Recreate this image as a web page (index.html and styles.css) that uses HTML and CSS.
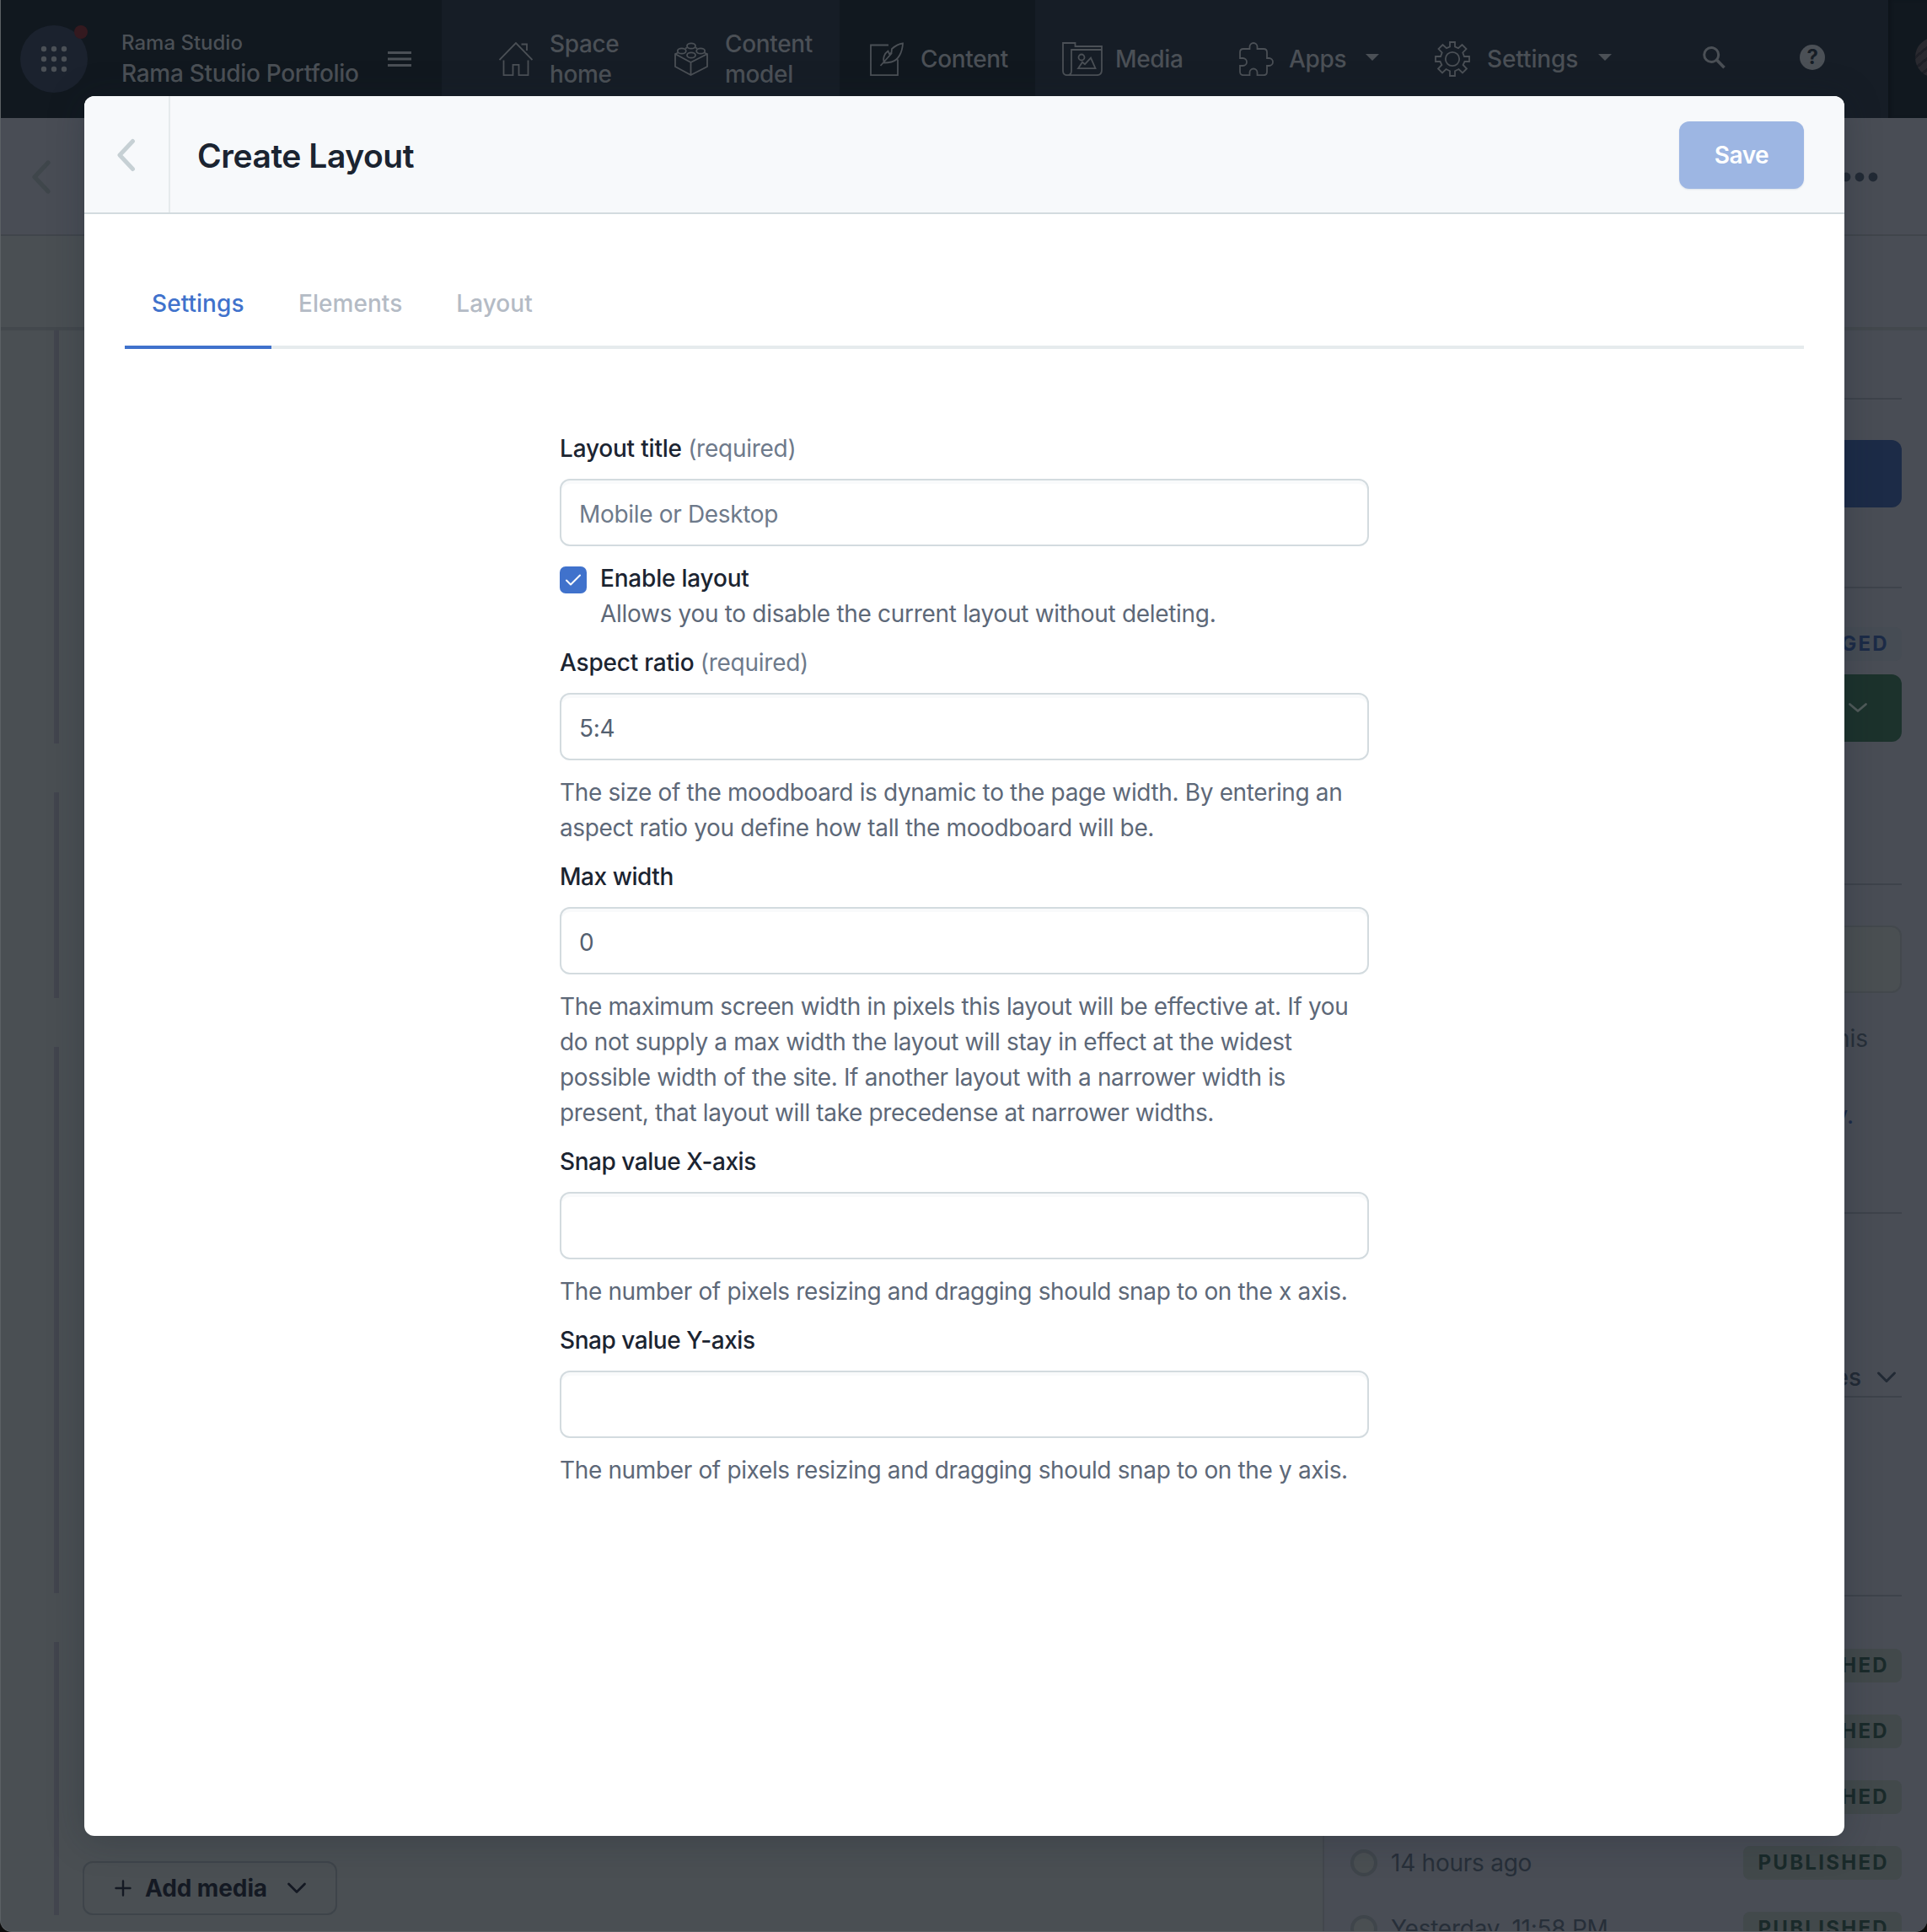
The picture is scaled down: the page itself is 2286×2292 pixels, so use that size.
FILE: index.html
```html
<!DOCTYPE html>
<html lang="en">
<head>
<meta charset="utf-8">
<title>Create Layout</title>
<link rel="stylesheet" href="styles.css">
</head>
<body>
<div class="page">
  <nav class="nav">
    <div class="nav-space">
      <div class="launcher">
        <svg width="80" height="80" viewBox="0 0 80 80"><g fill="#4b5056"><circle cx="28" cy="28" r="3.2"/><circle cx="40" cy="28" r="3.2"/><circle cx="52" cy="28" r="3.2"/><circle cx="28" cy="40" r="3.2"/><circle cx="40" cy="40" r="3.2"/><circle cx="52" cy="40" r="3.2"/><circle cx="28" cy="52" r="3.2"/><circle cx="40" cy="52" r="3.2"/><circle cx="52" cy="52" r="3.2"/></g></svg>
        <span class="launcher-dot"></span>
      </div>
      <div class="space-names"><span class="org">Rama Studio</span><span class="space">Rama Studio Portfolio</span></div>
      <svg class="burger" width="28" height="18" viewBox="0 0 28 18" fill="#4b5056"><path d="M0 0h28v3H0zM0 7.500h28v3H0zM0 15h28v3H0z"/></svg>
    </div>
    <div class="nav-item home">
      <svg class="line" width="40" height="40" viewBox="0 0 40 40"><path d="M0.500 21L20 1l19.500 20M5.500 21.500V39.200h11V26.800h7V39.200h11V21.500M26.500 2.500h6.500v7.500"/></svg>
      <span>Space<br>home</span>
    </div>
    <div class="nav-item model">
      <svg class="line" width="40" height="40" viewBox="0 0 40 40"><ellipse cx="20" cy="4.500" rx="5" ry="3.200"/><ellipse cx="8.800" cy="10.500" rx="5" ry="3.200"/><ellipse cx="31.200" cy="10.500" rx="5" ry="3.200"/><ellipse cx="20" cy="15.500" rx="5" ry="3.200"/><path d="M4.500 12.500L1 14v15l18.500 10L39 29V14l-3.500-1.500M1 14l18.500 10L39 14M19.500 24v15M13 7.500l2-1M27 7.500l-2-1"/></svg>
      <span>Content<br>model</span>
    </div>
    <div class="nav-item content">
      <svg class="line" width="40" height="40" viewBox="0 0 40 40"><path d="M22 3.500H1v35.700h32V20.500M12.500 28L26 13M17 24.500c-2-5 0-11 4.500-14l1.500 3.500 2.500-1.500.5-4.500c4-3.500 8-6 13-6.500-.5 10-5 20-13.500 22-3.500.8-6.500 1-8.500 1z"/></svg>
      <span>Content</span>
    </div>
    <div class="nav-item media">
      <svg class="line" width="48" height="40" viewBox="0 0 48 40"><path d="M6 39.200c-3 0-5-2-5-5V1h14.500v4H47v28c0 4-2 6.200-6 6.200zM6 39.200c3 0 5-2 5-5V9h36"/><circle cx="23" cy="18" r="3.500"/><path d="M19 31.200l5-7.500 3 2.500 7-7.500 5.500 12.500z"/></svg>
      <span>Media</span>
    </div>
    <div class="nav-item apps">
      <svg class="line" width="41" height="40" viewBox="0 0 41 40"><path d="M5 8h7.500V5.500a4.500 4.500 0 0 1 9 0V8H29c2.500 0 4 1.500 4 4v7h2.500a4.500 4.500 0 0 1 0 9H33v7c0 2.600-1.500 4.200-4 4.200h-7.500V36a4.500 4.500 0 0 0-9 0v3.200H5c-2.500 0-4-1.600-4-4.200v-7h3.500a4.500 4.500 0 0 0 0-9H1v-7c0-2.500 1.500-4 4-4z"/></svg>
      <span>Apps</span>
      <svg class="caret" width="16" height="8" viewBox="0 0 16 8"><path d="M0 0h16L8 8z" fill="#4b5056"/></svg>
    </div>
    <div class="nav-item settings">
      <svg class="line" width="42" height="42" viewBox="0 0 42 42"><circle cx="21" cy="21" r="8.200"/><path d="M18 1h6v5.500l4 1.700 4.500-4.200 5 5-4.200 4.500 1.700 4.500H41v6h-5.500l-1.900 4 4.400 4.500-5 5-4.500-4.500-4.500 2.200V41h-6v-5.800l-4.500-2.200L9 37.500l-5-5L8.400 28l-1.900-4H1v-6h6l1.700-4.500L4.500 9l5-5L14 8.200l4-1.700z"/></svg>
      <span>Settings</span>
      <svg class="caret" width="16" height="8" viewBox="0 0 16 8"><path d="M0 0h16L8 8z" fill="#4b5056"/></svg>
    </div>
    <div class="nav-tools">
      <svg width="28" height="27" viewBox="0 0 28 27" fill="none" stroke="#4b5056" stroke-width="3"><circle cx="10.200" cy="10" r="8.500"/><path d="M16.500 16L25.500 25.200" stroke-width="3.600"/></svg>
      <span class="help">?</span>
    </div>
    <div class="nav-user"><span class="avatar"></span></div>
  </nav>

  <header class="entry-head">
    <svg width="24" height="40" viewBox="0 0 24 40" fill="none" stroke="#3f464b" stroke-width="5.200" stroke-linecap="round" stroke-linejoin="round"><path d="M20 3L4 20l16 17"/></svg>
    <svg width="44" height="12" viewBox="0 0 44 12" fill="#222a35"><circle cx="6" cy="6" r="5.400"/><circle cx="22" cy="6" r="5.400"/><circle cx="38" cy="6" r="5.400"/></svg>
  </header>

  <div class="entry">
    <main class="editor">
      <div class="editor-tabs"></div>
      <div class="fields">
        <section class="field f1"></section>
        <section class="field f2"></section>
        <section class="field f3"></section>
        <section class="field f4">
          <button class="add">
            <svg width="20" height="20" viewBox="0 0 20 20" stroke="#141923" stroke-width="2.400" stroke-linecap="round"><path d="M10 1.500v17M1.500 10h17"/></svg>
            <span>Add media</span>
            <svg width="24" height="16" viewBox="0 0 24 16" fill="none" stroke="#141923" stroke-width="2.800" stroke-linecap="round" stroke-linejoin="round"><path d="M2.500 3l9.500 9.500L21.500 3"/></svg>
          </button>
        </section>
      </div>
    </main>
    <aside class="sidebar">
      <div class="side-tabs"></div>
      <div class="side-body">
        <hr class="r1">
        <div class="side-blue"></div>
        <hr class="r2">
        <div class="badge changed">CHANGED</div>
        <div class="side-green"><svg width="24" height="16" viewBox="0 0 24 16" fill="none" stroke="#515b5a" stroke-width="2.800" stroke-linecap="round" stroke-linejoin="round"><path d="M2.500 3.500l9.500 8 9.500-8"/></svg></div>
        <hr class="r3">
        <div class="side-input"></div>
        <p class="side-note">this</p>
        <p class="side-link">y.</p>
        <hr class="r4">
        <div class="side-select"><span>es</span><svg width="24" height="16" viewBox="0 0 24 16" fill="none" stroke="#222a35" stroke-width="3" stroke-linecap="round" stroke-linejoin="round"><path d="M2.500 3l9.500 9.500L21.500 3"/></svg></div>
        <hr class="r5">
        <ul class="versions">
          <li><span class="badge">PUBLISHED</span></li>
          <li><span class="badge">PUBLISHED</span></li>
          <li><span class="badge">PUBLISHED</span></li>
          <li><i class="radio"></i><span class="when">14 hours ago</span><span class="badge">PUBLISHED</span></li>
          <li><i class="radio"></i><span class="when">Yesterday, 11:58 PM</span><span class="badge">PUBLISHED</span></li>
        </ul>
      </div>
    </aside>
  </div>
</div>

<div class="modal" role="dialog">
  <header class="modal-head">
    <div class="back"><svg width="24" height="42" viewBox="0 0 24 42" fill="none" stroke="#c6d0d4" stroke-width="5" stroke-linecap="round" stroke-linejoin="round"><path d="M20.500 4.500L5 21l15.500 16.500"/></svg></div>
    <h1>Create Layout</h1>
    <button class="save">Save</button>
  </header>
  <div class="tabs"><a class="tab on">Settings</a><a class="tab">Elements</a><a class="tab">Layout</a></div>
  <form class="form">
    <label class="label">Layout title <em>(required)</em></label>
    <div class="input ph">Mobile or Desktop</div>
    <div class="check">
      <span class="box"><svg width="20" height="16" viewBox="0 0 20 16" fill="none" stroke="#fff" stroke-width="2" stroke-linecap="round" stroke-linejoin="round"><path d="M2 8.500l5 5L18 2.500"/></svg></span>
      <div><label class="check-label">Enable layout</label><p class="check-help">Allows you to disable the current layout without deleting.</p></div>
    </div>
    <label class="label">Aspect ratio <em>(required)</em></label>
    <div class="input">5:4</div>
    <p class="hint">The size of the moodboard is dynamic to the page width. By entering an<br>aspect ratio you define how tall the moodboard will be.</p>
    <label class="label tight">Max width</label>
    <div class="input">0</div>
    <p class="hint">The maximum screen width in pixels this layout will be effective at. If you<br>do not supply a max width the layout will stay in effect at the widest<br>possible width of the site. If another layout with a narrower width is<br>present, that layout will take precedense at narrower widths.</p>
    <label class="label tight">Snap value X-axis</label>
    <div class="input"></div>
    <p class="hint">The number of pixels resizing and dragging should snap to on the x axis.</p>
    <label class="label tight">Snap value Y-axis</label>
    <div class="input"></div>
    <p class="hint">The number of pixels resizing and dragging should snap to on the y axis.</p>
  </form>
</div>
</body>
</html>
```
FILE: styles.css
```css
* { box-sizing: border-box; }
body { margin: 0; font-family: Inter, "Liberation Sans", sans-serif; font-size: 28px; background: #0d0d0d; }
button { font-family: inherit; cursor: pointer; }
svg { display: block; flex: none; }
p, ul, h1 { margin: 0; padding: 0; }
.page { height: 2292px; overflow: hidden; background: #4a4f53; border-left: 1px solid #5b6064; border-bottom: 1px solid #5b6064; border-radius: 0 0 14px 14px; display: flex; flex-direction: column; }

.nav { height: 140px; flex: none; display: flex; background: #161d26; color: #4b5056; font-weight: 450; letter-spacing: -0.35px; }
.nav-space { width: 523px; flex: none; background: #11181f; display: flex; align-items: center; padding-left: 23px; }
.launcher { position: relative; width: 80px; height: 80px; border-radius: 50%; background: #1b222e; }
.launcher-dot { position: absolute; top: 0; right: 0; width: 16px; height: 16px; border-radius: 50%; background: #34191f; }
.space-names { margin-left: 40px; width: 316px; display: flex; flex-direction: column; line-height: 36px; padding-bottom: 3px; }
.org { font-size: 24px; letter-spacing: 0; }
.space { font-size: 28px; letter-spacing: -0.3px; }
.nav-item { flex: none; display: flex; align-items: center; line-height: 36px; }
.nav-item > span { margin-left: 20px; }
.line { fill: none; stroke: #4b5056; stroke-width: 1.8; }
.home { width: 240px; padding-left: 68px; }
.model { width: 232px; padding-left: 36px; }
.content { width: 232px; padding-left: 36px; background: #11181f; }
.media { width: 206px; padding-left: 32px; }
.media > span { margin-left: 15px; }
.apps { width: 232px; padding: 0 30px 0 36px; }
.apps > span { margin-left: 18px; }
.settings { width: 276px; padding: 0 30px 0 36px; }
.settings > span { letter-spacing: -0.1px; }
.caret { margin-left: auto; margin-top: -4px; }
.nav-tools { flex: 1; display: flex; align-items: center; padding: 0 75px 4px 78px; justify-content: space-between; }
.help { width: 30px; height: 30px; border-radius: 50%; background: #4b5056; color: #161d26; font-size: 24px; font-weight: 700; line-height: 30px; text-align: center; }
.nav-user { width: 46px; flex: none; background: #11181f; box-shadow: inset 4px 0 4px -2px #0d131a; padding: 44px 0 0 32px; overflow: hidden; }
.avatar { display: block; width: 48px; height: 48px; border-radius: 50%; background: repeating-linear-gradient(140deg, #29292f 0 7px, #1e1f26 7px 10px); }

.entry-head { height: 140px; flex: none; background: #494d55; border-bottom: 2px solid #40454b; display: flex; align-items: center; justify-content: space-between; padding: 2px 58px 0 36px; }
.entry { flex: 1; display: flex; min-height: 0; }
.editor { flex: 1; }
.editor-tabs, .side-tabs { height: 112px; border-bottom: 4px solid #43484d; }
.fields { display: flex; flex-direction: column; gap: 58px; padding-left: 63px; }
.field { border-left: 6px solid #42454e; flex: none; }
.f1 { height: 490px; } .f2 { height: 244px; } .f3 { height: 648px; }
.f4 { height: 324px; display: flex; align-items: flex-end; padding-left: 28px; }
.add { width: 302px; height: 64px; border: 2px solid #3e444a; border-radius: 12px; background: none; display: flex; align-items: center; padding: 0 0 0 36px; font-size: 28px; font-weight: 650; letter-spacing: -0.1px; color: #141923; }
.add span { margin: 0 auto 0 16px; }
.add svg:last-child { margin-right: 34px; }

.sidebar { width: 717px; flex: none; background: #494d55; border-left: 2px solid #43474d; overflow: hidden; }
.side-body { padding: 0 30px 0 31px; display: flex; flex-direction: column; }
hr { width: 100%; height: 2px; border: 0; background: #3e434b; margin: 0; }
.r1 { margin-top: 80px; }
.side-blue { margin-top: 48px; height: 80px; border-radius: 12px; background: #1c2b47; }
.r2 { margin-top: 94px; }
.badge { height: 40px; line-height: 40px; padding: 0 15px 0 17px; border-radius: 8px; background: #42494b; color: #1a2a2a; font-size: 24px; font-weight: 650; letter-spacing: 2.3px; margin-left: auto; }
.changed { margin-top: 46px; background: #464c54; color: #1c2b47; }
.side-green { margin-top: 16px; height: 80px; border-radius: 12px; background: #1c322c; display: flex; align-items: center; justify-content: flex-end; padding-right: 40px; }
.r3 { margin-top: 168px; }
.side-input { margin-top: 48px; height: 80px; border: 2px solid #43484d; border-radius: 12px; background: #4a4f52; }
.side-note, .side-link { line-height: 42px; text-align: right; }
.side-note { margin-top: 33px; padding-right: 40px; color: #272f39; }
.side-link { margin-top: 49px; padding-right: 57px; color: #1c2b47; }
.r4 { margin-top: 94px; }
.side-select { margin-top: 170px; height: 48px; padding-top: 1px; border-bottom: 2px solid #3e434b; display: flex; align-items: center; justify-content: flex-end; gap: 18px; padding-right: 6px; color: #222a35; font-weight: 500; }
.r5 { margin-top: 234px; }
.versions { list-style: none; margin-top: 62px; display: flex; flex-direction: column; gap: 38px; }
.versions li { height: 40px; display: flex; align-items: center; }
.radio { width: 32px; height: 32px; border: 4px solid #3f454b; border-radius: 50%; background: #4a4f52; }
.when { margin-left: 16px; color: #272f39; letter-spacing: -0.25px; }

.modal { position: absolute; left: 100px; top: 114px; width: 2088px; height: 2064px; background: #fff; border-radius: 12px; overflow: hidden; box-shadow: 0 4px 44px rgba(20, 30, 42, .26); }
.modal-head { height: 140px; background: #f7f9fb; border-bottom: 2px solid #d3dbdf; display: flex; align-items: center; }
.back { width: 102px; height: 100%; border-right: 2px solid #e6ebed; display: flex; align-items: center; padding: 2px 0 0 37px; }
h1 { margin-left: 32px; padding-top: 2px; font-size: 39px; font-weight: 600; color: #1b2431; letter-spacing: -0.45px; }
.save { margin: 2px 48px 0 auto; width: 148px; height: 80px; border: 0; border-radius: 12px; background: #9db6e3; color: #fff; font-size: 28px; font-weight: 600; letter-spacing: -0.5px; box-shadow: 0 1px 2px rgba(30, 60, 110, .12); }
.tabs { margin: 60px 48px 0; height: 100px; border-bottom: 4px solid #e6ebed; display: flex; }
.tab { height: 100px; padding: 0 32px; line-height: 93px; color: #b4bbc5; font-weight: 450; letter-spacing: 0.05px; }
.on { color: #4072cc; font-weight: 550; border-bottom: 4px solid #4072cc; width: 174px; }
.form { width: 960px; margin: 97px 0 0 564px; display: flex; flex-direction: column; line-height: 42px; color: #5d6878; }
.label, .check-label { font-weight: 550; color: #1b2431; display: block; letter-spacing: -0.2px; }
.tight { letter-spacing: -0.45px; }
.label em { font-style: normal; font-weight: 400; color: #6e7a8b; letter-spacing: -0.25px; }
.input { margin-top: 15px; height: 80px; border: 2px solid #d3dbdf; border-radius: 12px; padding: 0 21px; line-height: 81px; letter-spacing: -0.33px; color: #546070; box-shadow: inset 0 4px 1px #f9fafb; }
.ph { color: #6e7a8b; }
.hint { margin: 17px 0 16px; white-space: nowrap; letter-spacing: -0.355px; }
.check { display: flex; margin: 17px 0 16px; gap: 16px; }
.check-help { letter-spacing: -0.31px; }
.box { width: 32px; height: 32px; margin-top: 7px; border-radius: 7px; background: #4072cc; display: flex; align-items: center; justify-content: center; }
```
